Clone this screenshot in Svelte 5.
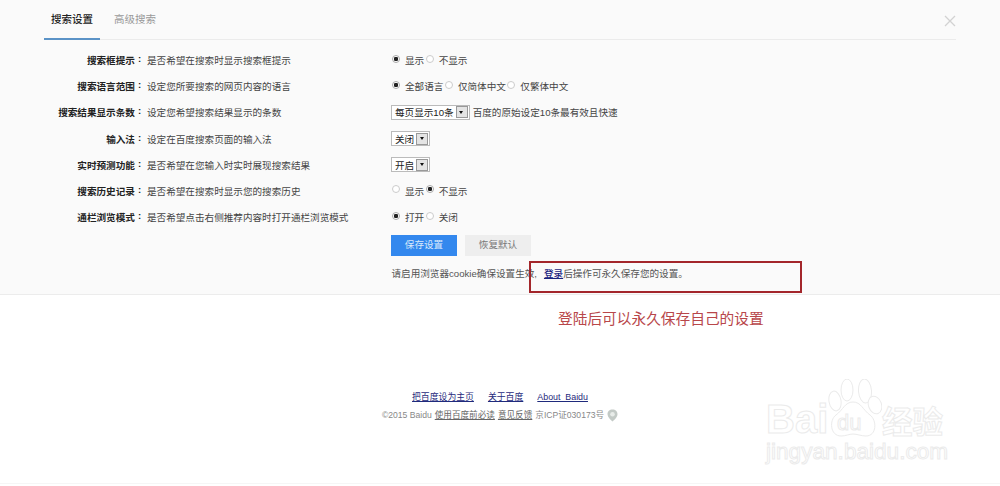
<script>
    const rows = [
        { label: '搜索框提示:', desc: '是否希望在搜索时显示搜索框提示', type: 'radio', options: [['显示', true], ['不显示', false]] },
        { label: '搜索语言范围:', desc: '设定您所要搜索的网页内容的语言', type: 'radio', options: [['全部语言', true], ['仅简体中文', false], ['仅繁体中文', false]] },
        { label: '搜索结果显示条数:', desc: '设定您希望搜索结果显示的条数', type: 'select', value: '每页显示10条', note: '百度的原始设定10条最有效且快速' },
        { label: '输入法:', desc: '设定在百度搜索页面的输入法', type: 'select', value: '关闭' },
        { label: '实时预测功能:', desc: '是否希望在您输入时实时展现搜索结果', type: 'select', value: '开启' },
        { label: '搜索历史记录:', desc: '是否希望在搜索时显示您的搜索历史', type: 'radio', options: [['显示', false], ['不显示', true]] },
        { label: '通栏浏览模式:', desc: '是否希望点击右侧推荐内容时打开通栏浏览模式', type: 'radio', options: [['打开', true], ['关闭', false]] }
    ];
</script>

<main class="page">
    <section class="panel">
        <nav class="tabs">
            <span class="tab active">搜索设置</span>
            <span class="tab">高级搜索</span>
            <svg class="close" width="12" height="12" viewBox="0 0 12 12">
                <path d="M1 1L11 11M11 1L1 11" stroke="#d2d2d2" stroke-width="1.3" fill="none" />
            </svg>
        </nav>

        <div class="rows">
            {#each rows as row}
                <div class="row">
                    <div class="left">
                        <b>{row.label.slice(0, -1)}<span class="colon">:</span></b>
                        <span class="desc">{row.desc}</span>
                    </div>
                    <div class="right">
                        {#if row.type === 'radio'}
                            {#each row.options as [text, on]}
                                <span class="radio" class:on></span>
                                <span class="opt">{text}</span>
                            {/each}
                        {:else}
                            <span class="select">
                                <span class="value">{row.value}</span>
                                <span class="arrow"></span>
                            </span>
                            {#if row.note}<span class="note">{row.note}</span>{/if}
                        {/if}
                    </div>
                </div>
            {/each}
        </div>

        <div class="actions">
            <span class="btn save">保存设置</span>
            <span class="btn reset">恢复默认</span>
        </div>
        <p class="tip">请启用浏览器cookie确保设置生效<span class="comma">,</span><a href="#login">登录</a>后操作可永久保存您的设置。</p>
        <div class="callout"></div>
    </section>

    <p class="remark">登陆后可以永久保存自己的设置</p>

    <footer>
        <div class="links">
            <a href="#home">把百度设为主页</a>
            <a href="#about">关于百度</a>
            <a href="#en">About&nbsp; Baidu</a>
        </div>
        <div class="copy">
            ©2015 Baidu <a href="#terms">使用百度前必读</a> <a href="#feedback">意见反馈</a> 京ICP证030173号
            <svg width="11" height="13" viewBox="0 0 11 13">
                <path d="M5.5 0.5C2.5 0.5 0.5 2.6 0.5 5.2C0.5 8 3.4 10.6 5.5 12.5C7.6 10.6 10.5 8 10.5 5.2C10.5 2.6 8.5 0.5 5.5 0.5Z" fill="#c3cac6" />
                <circle cx="5.5" cy="5.2" r="2.3" fill="#e8ece9" />
            </svg>
        </div>
    </footer>

    <div class="watermark">
        <svg class="paw" width="54" height="58" viewBox="0 0 54 58" fill="#fff" stroke="#ebebeb" stroke-width="1">
            <ellipse cx="7" cy="22" rx="6" ry="10" transform="rotate(-10 7 22)" />
            <ellipse cx="19" cy="11" rx="6" ry="11" />
            <ellipse cx="37" cy="12" rx="6.5" ry="12" transform="rotate(-4 37 12)" />
            <ellipse cx="47" cy="26" rx="6.5" ry="9" transform="rotate(-20 47 26)" />
            <path d="M25 23C17 23 15 31 8 36C1 41 2 57 13 57C18 57 21 55 25 55C29 55 33 57 38 57C49 57 49 41 42 36C35 31 33 23 25 23Z" />
        </svg>
        <span class="wm-du">du</span>
        <span class="wm-bai">Bai</span>
        <span class="wm-cn">经验</span>
        <span class="wm-url">jingyan.baidu.com</span>
    </div>
</main>

<style>
    :global(body) {
        margin: 0;
        background: #fff;
    }
    .page {
        position: relative;
        box-sizing: border-box;
        width: 1000px;
        height: 484px;
        border-bottom: 1px solid #f6f6f6;
        font-family: "Liberation Sans", "Noto Sans CJK SC", sans-serif;
        font-size: 9.6px;
        color: #444;
    }
    .panel {
        position: relative;
        box-sizing: border-box;
        height: 295px;
        padding: 0 44px;
        background: #fafafa;
        border-bottom: 1px solid #ececec;
    }
    .tabs {
        position: relative;
        display: flex;
        height: 39px;
        border-bottom: 1px solid #ebebeb;
    }
    .tab {
        width: 56px;
        margin-right: 7px;
        text-align: center;
        font-size: 10.5px;
        line-height: 38px;
        color: #999;
    }
    .tab.active {
        height: 40px;
        color: #222;
        font-weight: 500;
        border-bottom: 2px solid #5b93c7;
        box-sizing: border-box;
    }
    .close {
        position: absolute;
        right: 0;
        top: 15px;
    }
    .rows {
        padding-top: 7px;
    }
    .row {
        display: flex;
        align-items: center;
        height: 26.17px;
    }
    .left {
        display: flex;
        width: 347px;
    }
    .left b {
        display: flex;
        justify-content: flex-end;
        width: 100.5px;
        color: #222;
    }
    .colon {
        width: 9.6px;
        text-align: center;
    }
    .desc {
        margin-left: 2.5px;
    }
    .right {
        display: flex;
        align-items: center;
    }
    .radio {
        box-sizing: border-box;
        width: 8px;
        height: 8px;
        margin: -3px 4px 0 1px;
        border: 1px solid #ccc;
        border-radius: 50%;
        background: #fff;
    }
    .radio.on {
        background: radial-gradient(circle, #222 0 2px, #fff 2.4px);
        border-color: #aaa;
    }
    .opt {
        margin-right: 0.5px;
        margin-left: 1px;
    }
    .select {
        display: flex;
        align-items: center;
        box-sizing: border-box;
        height: 15px;
        padding: 0 1px 0 3px;
        background: #fff;
        border: 1px solid #bbb;
        color: #222;
    }
    .value {
        margin-right: 2px;
    }
    .arrow {
        position: relative;
        box-sizing: border-box;
        width: 12px;
        height: 12px;
        background: #e4e4e4;
        border: 1px solid #999;
    }
    .arrow::after {
        content: "";
        position: absolute;
        left: 2.5px;
        top: 3.5px;
        border: 2.5px solid transparent;
        border-top: 3px solid #111;
        border-bottom: 0;
    }
    .note {
        margin-left: 3px;
    }
    .actions {
        display: flex;
        gap: 8px;
        margin: 5px 0 0 347px;
    }
    .btn {
        width: 66px;
        height: 21px;
        line-height: 20px;
        text-align: center;
    }
    .save {
        background: #3388ee;
        color: #d8e8fb;
    }
    .reset {
        background: #eee;
        color: #777;
    }
    .tip {
        margin: 11px 0 0 347.5px;
        line-height: 14px;
        color: #555;
    }
    .comma {
        display: inline-block;
        width: 9.6px;
    }
    .tip a {
        color: #1a237e;
        font-weight: 500;
    }
    .callout {
        position: absolute;
        left: 529px;
        top: 261px;
        box-sizing: border-box;
        width: 273px;
        height: 32px;
        border: 2.5px solid #a3262b;
    }
    .remark {
        margin: 15px 0 0 558px;
        font-size: 14.7px;
        line-height: 18px;
        color: #b8474a;
    }
    footer {
        margin-top: 62px;
        text-align: center;
    }
    .links {
        display: flex;
        justify-content: center;
        gap: 14px;
        font-size: 8.85px;
        line-height: 14px;
    }
    .links a {
        color: #1f2a7c;
    }
    .copy {
        display: flex;
        justify-content: center;
        align-items: center;
        gap: 3px;
        margin-top: 4px;
        font-size: 8.6px;
        line-height: 14px;
        color: #888;
    }
    .copy a {
        color: #666;
    }
    .watermark {
        position: absolute;
        left: 766px;
        top: 378px;
        width: 190px;
        height: 90px;
        font-family: "Liberation Sans", "Noto Sans CJK SC", sans-serif;
        color: #fff;
        -webkit-text-stroke: 1px #ebebeb;
    }
    .watermark span {
        position: absolute;
    }
    .paw {
        position: absolute;
        left: 62px;
        top: 1px;
    }
    .wm-bai {
        left: 0;
        top: 19px;
        font-size: 40px;
        font-weight: 700;
        line-height: 44px;
    }
    .wm-du {
        left: 71px;
        top: 32px;
        font-size: 22px;
        line-height: 26px;
    }
    .wm-cn {
        left: 116px;
        top: 22px;
        font-size: 30.5px;
        font-weight: 700;
        line-height: 40px;
        font-family: "Noto Sans CJK SC", sans-serif;
    }
    .wm-url {
        left: 0;
        top: 60px;
        font-size: 22.6px;
        line-height: 28px;
        white-space: nowrap;
    }
</style>
